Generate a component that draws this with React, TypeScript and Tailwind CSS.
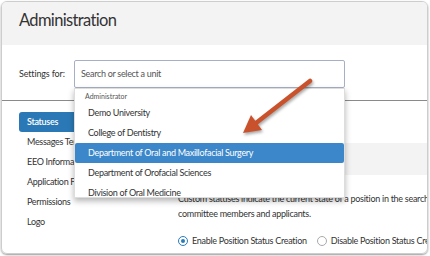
const sideItems = ['Messages Templates', 'EEO Information', 'Application Forms', 'Permissions', 'Logo']

const units = [
  'Demo University',
  'College of Dentistry',
  'Department of Oral and Maxillofacial Surgery',
  'Department of Orofacial Sciences',
  'Division of Oral Medicine',
]

function Arrow() {
  return (
    <svg
      className="pointer-events-none absolute left-0 top-0 z-20 drop-shadow-[1px_2px_1.5px_rgba(0,0,0,0.35)]"
      width="430"
      height="256"
      viewBox="0 0 430 256"
    >
      <line x1="310" y1="81" x2="256" y2="123" stroke="#c9512b" strokeWidth="4.5" strokeLinecap="round" />
      <polygon points="243,133 251,115 262,130" fill="#c9512b" />
    </svg>
  )
}

function Radio({ checked, label }: { checked?: boolean; label: string }) {
  return (
    <div className="flex items-center gap-[4px]">
      <span
        className={
          checked
            ? 'flex h-[10px] w-[10px] items-center justify-center rounded-full border-[1.5px] border-[#2b7bb9]'
            : 'h-[10px] w-[10px] rounded-full border border-[#aaa]'
        }
      >
        {checked && <span className="h-[4px] w-[4px] rounded-full bg-[#2b7bb9]" />}
      </span>
      <span>{label}</span>
    </div>
  )
}

export default function App() {
  return (
    <div className="relative h-[256px] w-[430px] overflow-hidden bg-white font-['Lato',sans-serif] text-[#333]">
      <div className="m-[1px] h-[253px] w-[427px] overflow-hidden rounded-[6px] border border-[#cdcdcd] shadow-[0_1px_2px_rgba(0,0,0,0.4)]">
        <header className="flex h-[43px] items-center bg-[#f3f3f3] pb-[6px] pl-[17px] text-[16.5px] leading-none tracking-[-0.65px]">
          Administration
        </header>

        <div className="h-[56px] border-b border-[#8a8a8a] pl-[17px] pt-[15px]">
          <div className="flex items-center">
            <span className="w-[55px] text-[9px] tracking-[-0.15px]">Settings for:</span>
            <div className="relative h-[28px] w-[271px] rounded-[2px] border border-[#a7b0c2]">
              <div className="flex h-full items-center pl-[6px] text-[9px] tracking-[-0.3px] text-[#555]">
                Search or select a unit
              </div>
              <div className="absolute left-[-1px] top-[27px] z-10 h-[110px] w-[271px] overflow-hidden border border-[#ddd] bg-white shadow-[0_3px_6px_rgba(0,0,0,0.3)]">
                <div className="flex h-[14px] items-center pl-[10px] pt-[1px] text-[7px] text-[#555]">
                  Administrator
                </div>
                {units.map((u, i) => (
                  <div
                    key={u}
                    className={
                      i === 2
                        ? 'flex h-[20px] items-center rounded-[2px] bg-[#3b87c9] pl-[13px] text-[9px] tracking-[-0.3px] text-white'
                        : 'flex h-[20px] items-center pl-[13px] text-[9px] tracking-[-0.3px]'
                    }
                  >
                    {u}
                  </div>
                ))}
              </div>
            </div>
          </div>
        </div>

        <div className="flex">
          <nav className="w-[166px] shrink-0 pl-[17px] pt-[11px] text-[9px] tracking-[-0.3px]">
            <div className="flex h-[20px] w-[130px] items-center rounded-[3px] bg-[#2a79b6] pl-[8px] font-semibold text-white">
              Statuses
            </div>
            {sideItems.map((s) => (
              <div key={s} className="flex h-[20px] items-center whitespace-nowrap pl-[8px]">
                {s}
              </div>
            ))}
          </nav>

          <main className="min-w-0 flex-1 whitespace-nowrap pt-[42px] text-[9px] tracking-[-0.28px]">
            <div className="h-[32px] bg-[#f3f3f3]" />
            <div className="pl-[10px] pt-[16px] leading-[15px]">
              <p>Custom statuses indicate the current state of a position in the search</p>
              <p>committee members and applicants.</p>
            </div>
            <div className="flex gap-[10px] pl-[10px] pt-[13px]">
              <Radio checked label="Enable Position Status Creation" />
              <Radio label="Disable Position Status Creation" />
            </div>
          </main>
        </div>
      </div>
      <Arrow />
    </div>
  )
}
